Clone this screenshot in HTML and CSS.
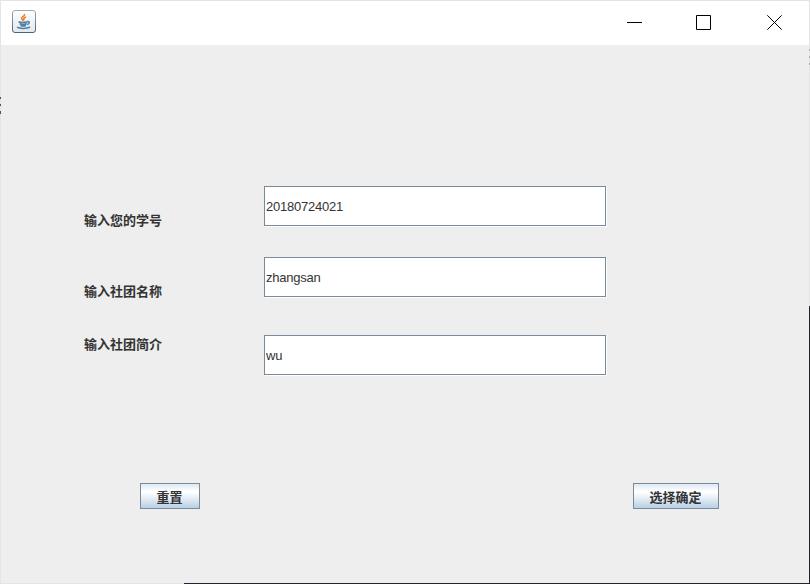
FILE: index.html
```
<!DOCTYPE html>
<html lang="zh-CN">
<head>
    <meta charset="UTF-8">
    <title>社团</title>
    <link rel="stylesheet" href="styles.css">
</head>
<body>
    <div class="window">
        <div class="titlebar">
            <svg class="java-icon" width="24" height="24" viewBox="0 0 24 24">
                <defs>
                    <linearGradient id="edge" x1="0" y1="0" x2="0" y2="1">
                        <stop offset="0" stop-color="#9fabb4"/>
                        <stop offset="1" stop-color="#426582"/>
                    </linearGradient>
                    <linearGradient id="face" x1="0" y1="0" x2="0" y2="1">
                        <stop offset="0" stop-color="#ffffff"/>
                        <stop offset="1" stop-color="#e3e8ec"/>
                    </linearGradient>
                </defs>
                <rect x="0.5" y="0.5" width="23" height="22" rx="2.500" fill="url(#face)" stroke="url(#edge)"/>
                <path d="M12.500 4c1 2-4 3.300-2.700 5L11.500 11M14 7c-2 .8-3 1.700-1.800 3.400" fill="none" stroke="#e8812e" stroke-width="1.500"/>
                <path d="M6.500 11.800c2 .8 6.500.8 8.800 0M7.500 13.800c2 .7 5.500.7 7.300 0M8.500 15.500c1.500.6 4 .6 5.500 0M15.300 11.500c2.800-.6 2.500 2.200-.2 3M5 17.200c2.500 1.700 10 1.600 13-.2" fill="none" stroke="#4f7fa3" stroke-width="1.500"/>
            </svg>
            <div class="controls">
                <svg width="16" height="16" viewBox="0 0 16 16"><path d="M1 8.500h15"/></svg>
                <svg width="16" height="16" viewBox="0 0 16 16"><path d="M0.500 1.500h14v14h-14z"/></svg>
                <svg width="16" height="16" viewBox="0 0 16 16"><path d="M0.300 1.300l14.400 14.400M14.700 1.300l-14.400 14.400"/></svg>
            </div>
        </div>

        <form class="form">
            <div class="row">
                <label for="sno">输入您的学号</label>
                <input type="text" id="sno" value="20180724021">
            </div>
            <div class="row">
                <label for="name">输入社团名称</label>
                <input type="text" id="name" value="zhangsan">
            </div>
            <div class="row row-intro">
                <label for="intro">输入社团简介</label>
                <input type="text" id="intro" value="wu">
            </div>
            <div class="buttons">
                <button type="reset">重置</button>
                <button type="button">选择确定</button>
            </div>
        </form>

        <div class="edge edge-right"></div>
        <div class="edge edge-bottom"></div>
        <div class="marks marks-left"><i></i><i></i><i></i></div>
        <div class="marks marks-right"><i></i><i></i><i></i></div>
    </div>
</body>
</html>
```

FILE: styles.css
```
* {
    box-sizing: border-box;
}

body {
    margin: 0;
    overflow: hidden;
    font-family: "Liberation Sans", "Noto Sans CJK SC", sans-serif;
    font-size: 13px;
    color: #333;
}

.window {
    position: relative;
    width: 810px;
    height: 584px;
    border: 1px solid #e4e4e4;
    background-color: #eee;
}

.titlebar {
    display: flex;
    justify-content: space-between;
    height: 44px;
    padding: 9px 26px 0 11px;
    background-color: #fff;
}

.controls {
    display: flex;
    gap: 54px;
    padding-top: 4px;
}

.controls svg {
    fill: none;
    stroke: #000;
}

.controls svg:last-child {
    margin-left: 1px;
}

.form {
    padding: 141px 0 0 83px;
}

.row {
    display: flex;
    width: 522px;
    height: 40px;
    margin-bottom: 31px;
    justify-content: space-between;
}

.row label {
    padding-top: 25px;
    line-height: 20px;
    font-weight: bold;
}

.row-intro {
    margin-top: 38px;
}

.row-intro label {
    padding-top: 0;
}

.row:nth-child(2) {
    margin-bottom: 0;
}

input {
    width: 342px;
    height: 40px;
    padding: 0 0 0 1px;
    border: 1px solid #7a8a99;
    border-radius: 0;
    outline: none;
    background-color: #fff;
    box-shadow: 1px 1px 0 #fff;
    font: inherit;
    letter-spacing: -0.23px;
    color: inherit;
}

.buttons {
    display: flex;
    justify-content: space-between;
    width: 579px;
    margin: 108px 0 0 56px;
}

button {
    height: 26px;
    padding: 3px 16px 0 15px;
    border: 1px solid #7a8a99;
    border-radius: 0;
    background: linear-gradient(#dde8f3, #fff 30%, #fff 35%, #b8cfe5);
    font: inherit;
    font-weight: bold;
    line-height: 20px;
    color: inherit;
}

button:first-child {
    width: 60px;
}

button:last-child {
    width: 86px;
}

/* dark desktop showing along the window border */
.edge {
    position: absolute;
    background-color: #25232b;
}

.edge-right {
    top: 305px;
    right: -1px;
    bottom: -1px;
    width: 1px;
}

.edge-bottom {
    left: 183px;
    right: -1px;
    bottom: -1px;
    height: 1px;
}

.marks {
    position: absolute;
    display: flex;
    flex-direction: column;
    gap: 5px;
    width: 1px;
}

.marks i {
    height: 2px;
    background-color: #555;
}

.marks-left {
    top: 96px;
    left: -1px;
}

.marks-left i:last-child {
    height: 3px;
}

.marks-right {
    top: 48px;
    right: -1px;
}

.marks-right i {
    background-color: #aaa;
}
```
